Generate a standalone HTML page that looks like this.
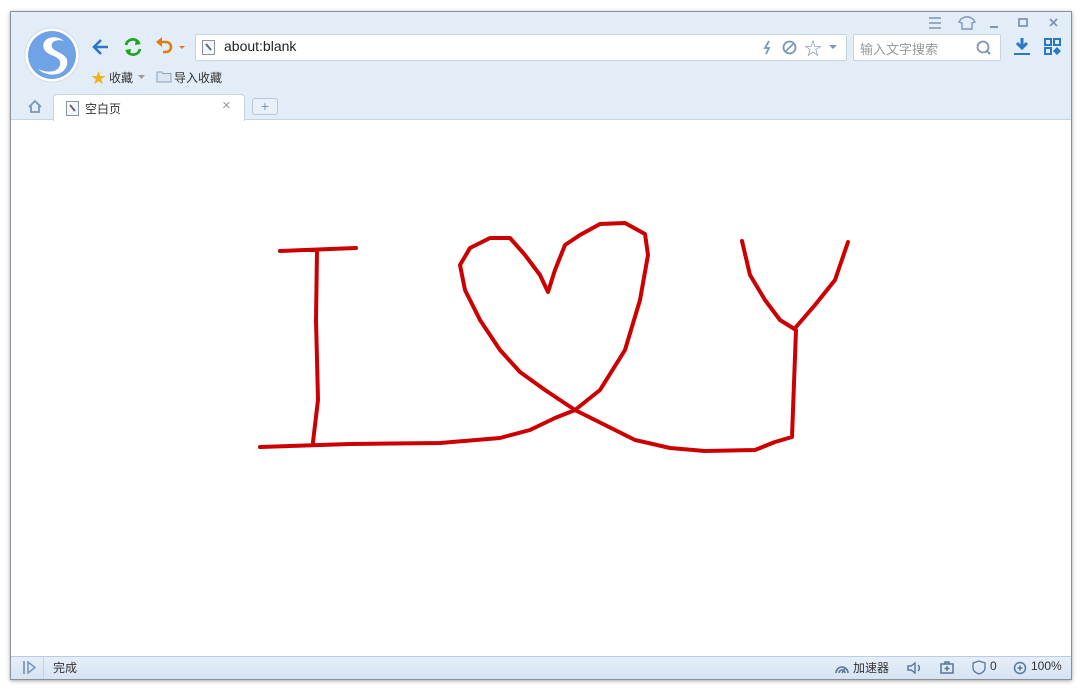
<!DOCTYPE html><html><head><meta charset="utf-8"><style>
body{margin:0;width:1087px;height:692px;background:#fff;position:relative;overflow:hidden;font-family:"Liberation Sans","Noto Sans CJK SC",sans-serif}
.win{position:absolute;left:10px;top:11px;width:1060px;height:667px;border:1px solid #8a9099;box-shadow:0 1px 4px rgba(0,0,0,.35);background:#fff}
.top{position:absolute;left:0;top:0;width:1060px;height:107px;background:#e3edf7;border-bottom:1px solid #c5d3e2}
.abs{position:absolute}
.addr{left:184px;top:22px;width:650px;height:25px;background:#fff;border:1px solid #c8d4e0;border-radius:2px}
.srch{left:842px;top:22px;width:146px;height:25px;background:#fff;border:1px solid #c8d4e0;border-radius:2px}
.t{font-size:12px;color:#333}
.tab{left:42px;top:82px;width:190px;height:26px;background:#fff;border:1px solid #c5d3e2;border-bottom:none;border-radius:4px 4px 0 0}
.status{position:absolute;left:0;bottom:0;width:1060px;height:22px;background:linear-gradient(#e6eff9,#d5e3f3);border-top:1px solid #b9cbe0}
</style></head><body>
<div class="win">
<div class="top">
 <svg class="abs" style="left:13px;top:15px" width="56" height="56"><circle cx="28" cy="28" r="27" fill="#fff" stroke="#d4dde7"/><circle cx="28" cy="28" r="24" fill="#6fa3e6"/><path d="M40 14 C30 6 16 12 20 22 C24 30 38 28 36 38 C34 46 22 46 14 42 C22 50 40 50 43 38 C46 26 30 26 28 20 C26 14 34 12 40 14Z" fill="#fff"/></svg>
 <svg class="abs" style="left:80px;top:25px" width="20" height="20"><path d="M17 10H4M10 3L3 10L10 17" stroke="#2b78c6" stroke-width="2.6" fill="none"/></svg>
 <svg class="abs" style="left:111px;top:24px" width="22" height="22"><path d="M4 9A7 7 0 0 1 17 7M18 13A7 7 0 0 1 5 15" stroke="#1fa51f" stroke-width="2.8" fill="none"/><path d="M14 3L19 8L13 9Z M8 19L3 14L9 13Z" fill="#1fa51f"/></svg>
 <svg class="abs" style="left:143px;top:24px" width="34" height="22"><path d="M6 6H12A5 5 0 0 1 12 16H9" stroke="#e07d10" stroke-width="2.6" fill="none"/><path d="M2 6L8 1V11Z" fill="#e07d10"/><path d="M25 10H31L28 13Z" fill="#e07d10"/></svg>
 <div class="abs addr"><svg class="abs" style="left:6px;top:5px" width="14" height="15"><rect x=".5" y=".5" width="12" height="14" fill="#f4f6f8" stroke="#8795a6"/><path d="M4 4L9 10" stroke="#667" stroke-width="2"/></svg><span class="abs" style="left:28px;top:3px;font-size:14px;color:#222">about:blank</span>
 <svg class="abs" style="left:566px;top:5px" width="10" height="15"><path d="M7 1L3 8H7L4 14" stroke="#7c97b6" stroke-width="1.8" fill="none"/></svg>
 <svg class="abs" style="left:586px;top:5px" width="15" height="15"><circle cx="7.5" cy="7.5" r="6" stroke="#7c97b6" stroke-width="1.8" fill="none"/><path d="M4 11L11 4" stroke="#7c97b6" stroke-width="1.8"/></svg>
 <span class="abs" style="left:608px;top:0px;color:#7c97b6;font-size:18px">☆</span>
 <svg class="abs" style="left:633px;top:10px" width="8" height="5"><path d="M0 0H8L4 4Z" fill="#7c97b6"/></svg></div>
 <div class="abs srch"><span class="abs" style="left:6px;top:4px;font-size:13px;color:#999">输入文字搜索</span><svg class="abs" style="left:122px;top:5px" width="16" height="16"><circle cx="7" cy="7" r="5.5" stroke="#7c97b6" stroke-width="1.8" fill="none"/><path d="M11 11L14 14" stroke="#7c97b6" stroke-width="2"/></svg></div>
 <svg class="abs" style="left:1002px;top:25px" width="18" height="20"><path d="M9 1V10M4 6L9 11L14 6" stroke="#2b78c6" stroke-width="3" fill="none"/><rect x="1" y="16" width="16" height="2" fill="#2b78c6"/></svg>
 <svg class="abs" style="left:1033px;top:26px" width="18" height="18"><rect x="1" y="1" width="6" height="6" fill="none" stroke="#2b78c6" stroke-width="2"/><rect x="10" y="1" width="6" height="6" fill="none" stroke="#2b78c6" stroke-width="2"/><rect x="1" y="10" width="6" height="6" fill="none" stroke="#2b78c6" stroke-width="2"/><path d="M13 9L17 13L13 17L9 13Z" fill="#2b78c6"/></svg>
 <svg class="abs" style="left:916px;top:4px" width="140" height="14"><path d="M2 2H14M2 7H14M2 12H14" stroke="#7c97b6" stroke-width="1.6"/><path d="M34 3L38 1H42L46 3L48 6L45 7V13H35V7L32 6Z" stroke="#7c97b6" stroke-width="1.4" fill="none"/><path d="M63 11H71" stroke="#7c97b6" stroke-width="2"/><rect x="92" y="3" width="8" height="7" fill="none" stroke="#7c97b6" stroke-width="1.8"/><path d="M123 3L130 10M130 3L123 10" stroke="#7c97b6" stroke-width="1.8"/></svg>
 <span class="abs" style="left:80px;top:55px;font-size:15px;color:#f2b01e">★</span><span class="abs t" style="left:98px;top:57px">收藏</span><svg class="abs" style="left:127px;top:63px" width="7" height="4"><path d="M0 0H7L3.5 4Z" fill="#999"/></svg>
 <svg class="abs" style="left:145px;top:58px" width="16" height="13"><path d="M1 2H6L7 3.5H15V12H1Z" fill="#dbe6f2" stroke="#8aa1bb"/></svg><span class="abs t" style="left:163px;top:57px">导入收藏</span>
 <svg class="abs" style="left:16px;top:87px" width="16" height="15"><path d="M2 8L8 2L14 8M4 6V13H12V6" stroke="#7c97b6" stroke-width="1.8" fill="none"/></svg>
 <div class="abs tab"><svg class="abs" style="left:12px;top:6px" width="14" height="15"><rect x=".5" y=".5" width="12" height="14" fill="#f4f6f8" stroke="#8795a6"/><path d="M4 4L9 10" stroke="#667" stroke-width="2"/></svg><span class="abs t" style="left:31px;top:5px">空白页</span><span class="abs" style="left:168px;top:2px;color:#999;font-size:15px">×</span></div>
 <div class="abs" style="left:241px;top:86px;width:24px;height:15px;border:1px solid #b8c8da;border-radius:3px;background:#e8f0f8;color:#7c97b6;font-size:14px;line-height:14px;text-align:center">+</div>
</div>
<svg class="abs" style="left:-11px;top:-12px" width="1087" height="692"><path d="M280 251L356 248M317 250L316 320L318 400L313 442M260 447L350 444L440 443L500 438L530 430L555 418L575 410L600 390L625 350L640 300L648 255L645 234L625 223L600 224L580 235L565 245L555 270L548 292L540 275L525 255L510 238L490 238L470 248L460 265L465 290L480 320L500 350L520 372L545 390L575 410L605 425L635 440L670 448L705 451L755 450L775 442L792 437L793 410L796 330L780 320L765 300L750 275L742 241M796 327L815 305L835 280L848 242" stroke="#c00" stroke-width="4" fill="none" stroke-linejoin="round" stroke-linecap="round"/></svg>
<div class="status">
 <svg class="abs" style="left:12px;top:4px" width="14" height="13"><path d="M1 0V13" stroke="#7c97b6" stroke-width="1.8"/><path d="M5 1L12 6.5L5 12Z" fill="none" stroke="#7c97b6" stroke-width="1.6"/></svg>
 <div class="abs" style="left:32px;top:0;width:1px;height:22px;background:#c5d3e2"></div>
 <span class="abs t" style="left:42px;top:2px">完成</span>
 <svg class="abs" style="left:823px;top:4px" width="16" height="13"><path d="M2 12A6 6 0 0 1 14 12M5 12A3 3 0 0 1 11 12M8 12L11 7" stroke="#5a7596" stroke-width="1.6" fill="none"/></svg><span class="abs t" style="left:842px;top:2px">加速器</span>
 <svg class="abs" style="left:896px;top:4px" width="16" height="14"><path d="M1 5H4L8 2V12L4 9H1Z" fill="none" stroke="#5a7596" stroke-width="1.4"/><path d="M11 4A4 4 0 0 1 11 10" stroke="#5a7596" stroke-width="1.4" fill="none"/></svg>
 <svg class="abs" style="left:929px;top:4px" width="14" height="13"><rect x="1" y="3" width="12" height="9" fill="none" stroke="#5a7596" stroke-width="1.5"/><path d="M5 3V1H9V3M7 5V10M4.5 7.5H9.5" stroke="#5a7596" stroke-width="1.5" fill="none"/></svg>
 <svg class="abs" style="left:961px;top:3px" width="14" height="15"><path d="M7 1L13 3V8C13 11 10 13 7 14C4 13 1 11 1 8V3Z" fill="none" stroke="#5a7596" stroke-width="1.3"/></svg><span class="abs t" style="left:979px;top:2px">0</span>
 <svg class="abs" style="left:1002px;top:4px" width="14" height="14"><circle cx="7" cy="7" r="5.5" fill="none" stroke="#5a7596" stroke-width="1.5"/><path d="M4.5 7H9.5M7 4.5V9.5" stroke="#5a7596" stroke-width="1.5"/></svg><span class="abs t" style="left:1020px;top:2px">100%</span>
</div>
</div>
</body></html>
